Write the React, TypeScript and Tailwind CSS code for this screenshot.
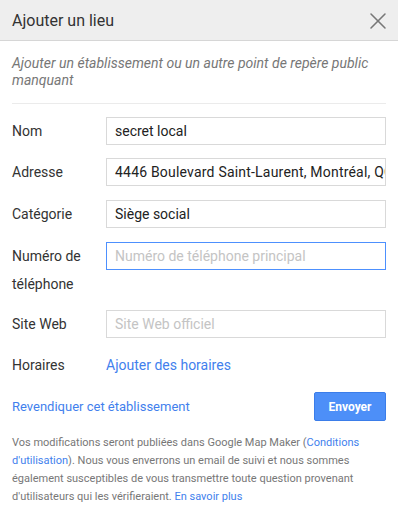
import { X } from 'lucide-react';

const font = { fontFamily: 'Roboto, Arial, sans-serif' };

function Field({ label, value, placeholder, focused, wide }: { label: string; value?: string; placeholder?: string; focused?: boolean; wide?: boolean }) {
    return (
        <div className="flex items-start">
            <div className="w-[94px] shrink-0 text-[14px] leading-[28px] text-[#333]">{label}</div>
            <div
                className={`flex-1 h-[28px] border ${focused ? 'border-[#4d90fe]' : 'border-[#d9d9d9]'} bg-white pl-[8px] text-[14px] leading-[26px] whitespace-nowrap overflow-hidden ${wide ? 'tracking-[0.2px]' : ''} ${value ? 'text-[#222]' : 'text-[#c4c4c4]'}`}
            >
                {value ?? placeholder}
            </div>
        </div>
    );
}

export default function App() {
    return (
        <div className="w-[398px] h-[511px] bg-white overflow-hidden" style={font}>
            <div className="h-[41px] bg-[#eeeeee] border-b border-[#d6d6d6] flex items-center justify-between pl-[12px] pr-[6px] pt-[1px]">
                <span className="text-[16px] text-[#333] leading-[20px]">Ajouter un lieu</span>
                <X size={28} strokeWidth={1.3} className="text-[#777]" />
            </div>

            <div className="px-[12px]">
                <p className="pt-[14px] pb-[14px] text-[14px] italic leading-[17px] text-[#777] border-b border-[#ebebeb]">
                    Ajouter un établissement ou un autre point de repère public manquant
                </p>

                <div className="pt-[13px] flex flex-col">
                    <Field label="Nom" value="secret local" />
                    <div className="h-[13px]" />
                    <Field label="Adresse" value="4446 Boulevard Saint-Laurent, Montréal, QC" wide />
                    <div className="h-[14px]" />
                    <Field label="Catégorie" value="Siège social" />
                    <div className="h-[14px]" />
                    <Field label="Numéro de téléphone" placeholder="Numéro de téléphone principal" focused />
                    <div className="h-[12px]" />
                    <Field label="Site Web" placeholder="Site Web officiel" />
                    <div className="h-[13px]" />
                    <div className="flex text-[14px] leading-[28px]">
                        <div className="w-[94px] text-[#333]">Horaires</div>
                        <span className="text-[#427fed]">Ajouter des horaires</span>
                    </div>
                </div>

                <div className="mt-[13px] flex items-center justify-between">
                    <span className="text-[13px] text-[#427fed]">Revendiquer cet établissement</span>
                    <button className="w-[72px] h-[29px] rounded-[2px] bg-[#4d8ff8] border border-[#3b7de9] text-white text-[12px] font-bold">
                        Envoyer
                    </button>
                </div>

                <p className="mt-[13px] text-[11px] leading-[18px] text-[#777]">
                    Vos modifications seront publiées dans Google Map Maker (<span className="text-[#427fed]">Conditions d'utilisation</span>). Nous vous enverrons un email de suivi et nous sommes également susceptibles de vous transmettre toute question provenant d'utilisateurs qui les vérifieraient. <span className="text-[#427fed]">En savoir plus</span>
                </p>
            </div>
        </div>
    );
}
